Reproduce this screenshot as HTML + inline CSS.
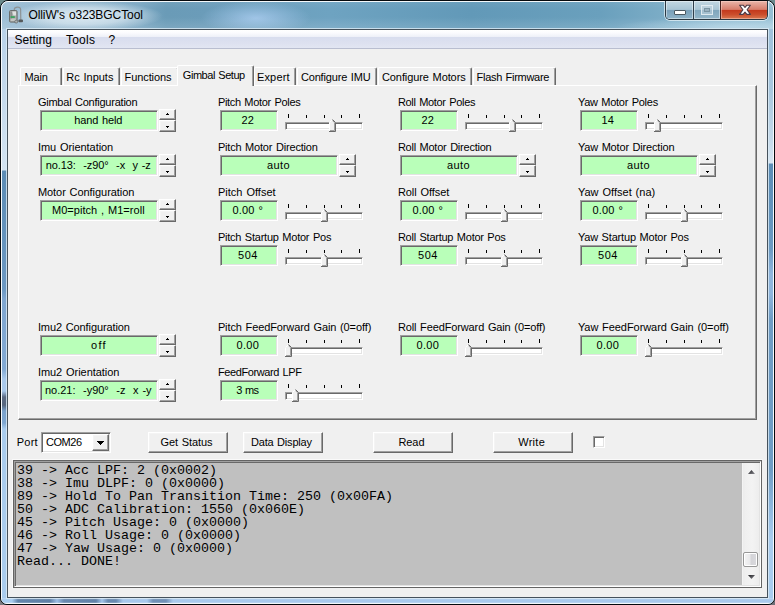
<!DOCTYPE html>
<html><head><meta charset="utf-8"><title>OlliW's o323BGCTool</title>
<style>
html,body{margin:0;padding:0;background:#000;}
body{width:775px;height:605px;overflow:hidden;position:relative;font-family:"Liberation Sans",sans-serif;}
#win{position:absolute;left:0;top:0;width:775px;height:605px;overflow:hidden;}
.abs,.t,.ed,.sp,.btn,.tab,.tk,.tr,.th{position:absolute;}
.t{white-space:pre;line-height:13px;height:13px;color:#000;}
.ed{box-sizing:border-box;height:21px;background:#b9ffb9;border:1px solid;border-color:#a0a0a0 #fff #fff #a0a0a0;box-shadow:inset 1px 1px 0 #696969, inset -1px -1px 0 #e3e3e3;}
.sb{position:absolute;box-sizing:border-box;width:17px;height:11px;background:#f0f0f0;border:1px solid;border-color:#fff #696969 #696969 #fff;box-shadow:inset -1px -1px 0 #a0a0a0, inset 1px 1px 0 #f4f4f4;}
.btn{box-sizing:border-box;width:80px;height:21px;background:#f0f0f0;border:1px solid;border-color:#fff #696969 #696969 #fff;box-shadow:inset -1px -1px 0 #a0a0a0, inset 1px 1px 0 #f4f4f4;}
.tk{width:1px;background:#000;}
.tr{box-sizing:border-box;width:78px;height:8px;background:#fff;border:1px solid;border-color:#a0a0a0 #fff #fff #a0a0a0;box-shadow:inset 1px 1px 0 #696969, inset -1px -1px 0 #e3e3e3;}
</style></head><body>
<div id="win">

<div class="abs" style="left:0;top:0;width:775px;height:605px;background:#05090d;"></div>
<div class="abs" style="left:0;top:0;width:8px;height:8px;background:#6a8a8c;"></div><div class="abs" style="left:767px;top:0;width:8px;height:8px;background:#6a8a8e;"></div>
<div class="abs" style="left:0;top:597px;width:8px;height:8px;background:#7a7a80;"></div><div class="abs" style="left:767px;top:597px;width:8px;height:8px;background:#707078;"></div>
<div class="abs" id="glass" style="left:0;top:0;width:775px;height:605px;box-sizing:border-box;border:1px solid #05090d;border-radius:8px 8px 7px 7px;
background:
 linear-gradient(to bottom, rgba(255,255,255,0.06) 0px, rgba(255,255,255,0) 8px, rgba(255,255,255,0) 16px, rgba(255,255,255,0.13) 28px, rgba(255,255,255,0) 29px),
 radial-gradient(ellipse 120px 10px at 735px 26px, rgba(190,220,236,0.7), rgba(190,220,236,0) 100%),
 radial-gradient(ellipse 78px 15px at 84px 15px, rgba(232,242,248,0.9), rgba(232,242,248,0.6) 55%, rgba(232,242,248,0) 100%),
 radial-gradient(ellipse 55px 17px at 255px 17px, rgba(168,203,238,0.85), rgba(168,203,238,0) 100%),
 linear-gradient(to right, #9dbfd6 0px, #98bad1 30px, #7ca8c3 138px, #6a9bb7 165px, #6b9cb9 205px, #6ea3c1 330px, #6299b8 470px, #6aa0bd 600px, #86b4cc 700px, #96bfd4 775px);"></div>
<div class="abs" style="left:1px;top:1px;width:773px;height:603px;box-sizing:border-box;border:1px solid rgba(255,255,255,0.92);border-radius:7px 7px 6px 6px;"></div>

<div class="abs" style="left:2px;top:29px;width:5px;height:570px;background:linear-gradient(to bottom,#b9d2e9 0px,#d3e3f1 140px,#d6e5f2 141px,#5c8cb5 142px,#6b98c2 260px,#7fa6d0 270px,#82a9d3 340px,#a9c9ec 350px,#a9c9ec 362px,#5a6a84 368px,#56667e 376px,#7aa2cc 382px,#7ea6d0 394px,#a9ccee 400px,#a9ccee 570px);"></div>
<div class="abs" style="left:768px;top:29px;width:5px;height:570px;background:linear-gradient(to bottom,#9fc1db 0px,#a8c7de 60px,#c4d9ea 110px,#d8e6f2 134px,#5b8db6 135px,#6c9ac2 220px,#8fb5dc 245px,#8fb5dc 265px,#6f9cc4 290px,#6f9cc4 440px,#90b8de 480px,#a9ccee 510px,#a9ccee 570px);"></div>
<div class="abs" style="left:2px;top:598px;width:771px;height:5px;border-radius:0 0 4px 4px;background:linear-gradient(to right,#a9cdf0 0px,#a9cdf0 10px,#6485ab 16px,#5f80a6 48px,#9bbde4 55px,#6888ae 62px,#6282a8 94px,#a2c4ea 100px,#6a8ab0 106px,#6a8ab0 114px,#a7c8ec 121px,#a7c8ec 145px,#7090b6 151px,#7090b6 164px,#a9c9ec 171px,#a9c9ec 771px);"></div>
<div class="abs" style="left:2px;top:598px;width:771px;height:5px;border-radius:0 0 4px 4px;background:linear-gradient(to bottom,rgba(255,255,255,0.25),rgba(255,255,255,0) 2px,rgba(255,255,255,0) 4px,rgba(255,255,255,0.3) 5px);"></div>
<div class="abs" style="left:6px;top:28px;width:763px;height:571px;box-sizing:border-box;border:1px solid rgba(220,235,245,0.8);"></div>
<div class="abs" style="left:7px;top:29px;width:761px;height:569px;box-sizing:border-box;border:1px solid #46525c;background:#f0f0f0;"></div>
<div class="abs" style="left:8px;top:30px;width:759px;height:19px;background:linear-gradient(#ffffff 0%,#fbfbfe 15%,#eef0f8 36%,#d8ddee 38%,#dde1f0 70%,#e3e7f3 100%);"></div>
<div class="abs" style="left:8px;top:48px;width:759px;height:1px;background:#b9bed0;"></div>
<svg class="abs" style="left:8px;top:6px" width="17" height="18" viewBox="0 0 17 18">
<path d="M6.3 4.5 L6.3 3.2 C6.6 0.6 12.3 0.4 12.6 3.2 L12.8 14" fill="none" stroke="#8d9294" stroke-width="1.2"/>
<rect x="1.5" y="4.5" width="7.6" height="11.6" rx="1.2" fill="#a7aaa8" stroke="#6a6e6c" stroke-width="1"/>
<path d="M4.2 5.6 L8 5.6 L8 9.4 L5.4 9.4 Z" fill="#dfe1df"/>
<rect x="2.4" y="5.6" width="1.6" height="9.4" fill="#8b8e8c"/>
<rect x="2.6" y="10.2" width="4.2" height="1.7" fill="#35a35a"/>
<rect x="2.6" y="12.6" width="5.4" height="2.4" fill="#c4c6c4"/>
<rect x="10.4" y="13.6" width="4.6" height="2.6" rx="1" fill="#55595b"/>
<circle cx="8.2" cy="15.6" r="1.5" fill="#b0b3b1" stroke="#5f6466" stroke-width="0.7"/>
</svg>
<div class="abs" style="left:664px;top:1px;width:105px;height:20px;box-sizing:border-box;border:1px solid rgba(235,245,250,0.7);border-top:none;border-radius:0 0 6px 6px;"></div>
<div class="abs" style="left:665px;top:1px;width:103px;height:19px;box-sizing:border-box;border:1px solid #2a3842;border-top:none;border-radius:0 0 5px 5px;overflow:hidden;background:#7faac2;">
 <div class="abs" style="left:0;top:0;width:27px;height:18px;background:linear-gradient(#c2d7e2 0%,#a8c4d4 47%,#789fb8 50%,#8fb3c8 100%);box-shadow:inset 0 0 0 1px rgba(255,255,255,0.45);"></div>
 <div class="abs" style="left:27px;top:0;width:1px;height:18px;background:#2f3e4a;"></div>
 <div class="abs" style="left:28px;top:0;width:26px;height:18px;background:linear-gradient(#c2d7e2 0%,#abc6d5 47%,#7fa5bc 50%,#93b6c9 100%);box-shadow:inset 0 0 0 1px rgba(255,255,255,0.45);"></div>
 <div class="abs" style="left:54px;top:0;width:1px;height:18px;background:#4a2420;"></div>
 <div class="abs" style="left:55px;top:0;width:47px;height:18px;background:linear-gradient(#e9b6aa 0%,#d77e6c 47%,#c3381c 50%,#cb4e2c 75%,#d97a52 100%);box-shadow:inset 0 0 0 1px rgba(255,220,210,0.45);"></div>
</div>
<div class="abs" style="left:674px;top:10px;width:12px;height:5px;box-sizing:border-box;border:1px solid #4a5860;background:#fff;border-radius:1px;"></div>
<div class="abs" style="left:701px;top:5px;width:12px;height:10px;box-sizing:border-box;border:1px solid rgba(235,242,246,0.8);background:rgba(200,215,225,0.5);"></div>
<div class="abs" style="left:704px;top:8px;width:6px;height:4px;box-sizing:border-box;border:1px solid rgba(120,145,160,0.9);background:rgba(150,175,190,0.8);"></div>
<svg class="abs" style="left:737px;top:3px" width="16" height="14" viewBox="0 0 16 14">
<path d="M2.6 2.2 L6.1 2.2 L8 4.5 L9.9 2.2 L13.4 2.2 L10.1 6.8 L13.4 11.4 L9.9 11.4 L8 9.1 L6.1 11.4 L2.6 11.4 L5.9 6.8 Z" fill="#fff" stroke="#4c3a44" stroke-width="1.1" stroke-linejoin="round"/>
</svg>

<div class="abs" style="left:18px;top:85px;width:739px;height:335px;box-sizing:border-box;border:1px solid;border-color:#fff #696969 #696969 #fff;box-shadow:inset -1px -1px 0 #a0a0a0;"></div>
<div class="abs" style="left:20px;top:67px;width:42px;height:18px;box-sizing:border-box;background:#f0f0f0;border:1px solid;border-color:#fff #696969 transparent #fff;border-bottom:none;border-radius:2px 2px 0 0;box-shadow:inset -1px 0 0 #a0a0a0;"></div>
<div class="abs" style="left:63px;top:67px;width:57px;height:18px;box-sizing:border-box;background:#f0f0f0;border:1px solid;border-color:#fff #696969 transparent #fff;border-bottom:none;border-radius:2px 2px 0 0;box-shadow:inset -1px 0 0 #a0a0a0;"></div>
<div class="abs" style="left:121px;top:67px;width:58px;height:18px;box-sizing:border-box;background:#f0f0f0;border:1px solid;border-color:#fff #696969 transparent #fff;border-bottom:none;border-radius:2px 2px 0 0;box-shadow:inset -1px 0 0 #a0a0a0;"></div>
<div class="abs" style="left:177px;top:65px;width:77px;height:21px;box-sizing:border-box;background:#f0f0f0;border:1px solid;border-color:#fff #696969 transparent #fff;border-bottom:none;border-radius:2px 2px 0 0;box-shadow:inset -1px 0 0 #a0a0a0;"></div>
<div class="abs" style="left:254px;top:67px;width:42px;height:18px;box-sizing:border-box;background:#f0f0f0;border:1px solid;border-color:#fff #696969 transparent #fff;border-bottom:none;border-radius:2px 2px 0 0;box-shadow:inset -1px 0 0 #a0a0a0;"></div>
<div class="abs" style="left:297px;top:67px;width:80px;height:18px;box-sizing:border-box;background:#f0f0f0;border:1px solid;border-color:#fff #696969 transparent #fff;border-bottom:none;border-radius:2px 2px 0 0;box-shadow:inset -1px 0 0 #a0a0a0;"></div>
<div class="abs" style="left:378px;top:67px;width:94px;height:18px;box-sizing:border-box;background:#f0f0f0;border:1px solid;border-color:#fff #696969 transparent #fff;border-bottom:none;border-radius:2px 2px 0 0;box-shadow:inset -1px 0 0 #a0a0a0;"></div>
<div class="abs" style="left:473px;top:67px;width:83px;height:18px;box-sizing:border-box;background:#f0f0f0;border:1px solid;border-color:#fff #696969 transparent #fff;border-bottom:none;border-radius:2px 2px 0 0;box-shadow:inset -1px 0 0 #a0a0a0;"></div>
<div class="ed" style="left:40px;top:110px;width:118px"></div>
<div class="ed" style="left:40px;top:155px;width:118px"></div>
<div class="ed" style="left:40px;top:200px;width:118px"></div>
<div class="ed" style="left:40px;top:335px;width:118px"></div>
<div class="ed" style="left:40px;top:380px;width:118px"></div>
<div class="ed" style="left:220px;top:110px;width:58px"></div>
<div class="ed" style="left:220px;top:155px;width:118px"></div>
<div class="ed" style="left:220px;top:200px;width:58px"></div>
<div class="ed" style="left:220px;top:245px;width:58px"></div>
<div class="ed" style="left:220px;top:335px;width:58px"></div>
<div class="ed" style="left:400px;top:110px;width:58px"></div>
<div class="ed" style="left:400px;top:155px;width:118px"></div>
<div class="ed" style="left:400px;top:200px;width:58px"></div>
<div class="ed" style="left:400px;top:245px;width:58px"></div>
<div class="ed" style="left:400px;top:335px;width:58px"></div>
<div class="ed" style="left:580px;top:110px;width:58px"></div>
<div class="ed" style="left:580px;top:155px;width:118px"></div>
<div class="ed" style="left:580px;top:200px;width:58px"></div>
<div class="ed" style="left:580px;top:245px;width:58px"></div>
<div class="ed" style="left:580px;top:335px;width:58px"></div>
<div class="ed" style="left:220px;top:380px;width:58px"></div>
<div class="sb" style="left:159px;top:109px"><svg class="abs" style="left:6px;top:3px" width="3" height="2" viewBox="0 0 3 2"><path d="M1 0h1v1h1v1h-3v-1h1z" fill="#000"/></svg></div><div class="sb" style="left:159px;top:120px;height:12px"><svg class="abs" style="left:6px;top:5px" width="3" height="2" viewBox="0 0 3 2"><path d="M0 0h3v1h-1v1h-1v-1h-1z" fill="#000"/></svg></div>
<div class="sb" style="left:159px;top:154px"><svg class="abs" style="left:6px;top:3px" width="3" height="2" viewBox="0 0 3 2"><path d="M1 0h1v1h1v1h-3v-1h1z" fill="#000"/></svg></div><div class="sb" style="left:159px;top:165px;height:12px"><svg class="abs" style="left:6px;top:5px" width="3" height="2" viewBox="0 0 3 2"><path d="M0 0h3v1h-1v1h-1v-1h-1z" fill="#000"/></svg></div>
<div class="sb" style="left:159px;top:199px"><svg class="abs" style="left:6px;top:3px" width="3" height="2" viewBox="0 0 3 2"><path d="M1 0h1v1h1v1h-3v-1h1z" fill="#000"/></svg></div><div class="sb" style="left:159px;top:210px;height:12px"><svg class="abs" style="left:6px;top:5px" width="3" height="2" viewBox="0 0 3 2"><path d="M0 0h3v1h-1v1h-1v-1h-1z" fill="#000"/></svg></div>
<div class="sb" style="left:159px;top:334px"><svg class="abs" style="left:6px;top:3px" width="3" height="2" viewBox="0 0 3 2"><path d="M1 0h1v1h1v1h-3v-1h1z" fill="#000"/></svg></div><div class="sb" style="left:159px;top:345px;height:12px"><svg class="abs" style="left:6px;top:5px" width="3" height="2" viewBox="0 0 3 2"><path d="M0 0h3v1h-1v1h-1v-1h-1z" fill="#000"/></svg></div>
<div class="sb" style="left:159px;top:379px"><svg class="abs" style="left:6px;top:3px" width="3" height="2" viewBox="0 0 3 2"><path d="M1 0h1v1h1v1h-3v-1h1z" fill="#000"/></svg></div><div class="sb" style="left:159px;top:390px;height:12px"><svg class="abs" style="left:6px;top:5px" width="3" height="2" viewBox="0 0 3 2"><path d="M0 0h3v1h-1v1h-1v-1h-1z" fill="#000"/></svg></div>
<div class="sb" style="left:339px;top:154px"><svg class="abs" style="left:6px;top:3px" width="3" height="2" viewBox="0 0 3 2"><path d="M1 0h1v1h1v1h-3v-1h1z" fill="#000"/></svg></div><div class="sb" style="left:339px;top:165px;height:12px"><svg class="abs" style="left:6px;top:5px" width="3" height="2" viewBox="0 0 3 2"><path d="M0 0h3v1h-1v1h-1v-1h-1z" fill="#000"/></svg></div>
<div class="sb" style="left:519px;top:154px"><svg class="abs" style="left:6px;top:3px" width="3" height="2" viewBox="0 0 3 2"><path d="M1 0h1v1h1v1h-3v-1h1z" fill="#000"/></svg></div><div class="sb" style="left:519px;top:165px;height:12px"><svg class="abs" style="left:6px;top:5px" width="3" height="2" viewBox="0 0 3 2"><path d="M0 0h3v1h-1v1h-1v-1h-1z" fill="#000"/></svg></div>
<div class="sb" style="left:699px;top:154px"><svg class="abs" style="left:6px;top:3px" width="3" height="2" viewBox="0 0 3 2"><path d="M1 0h1v1h1v1h-3v-1h1z" fill="#000"/></svg></div><div class="sb" style="left:699px;top:165px;height:12px"><svg class="abs" style="left:6px;top:5px" width="3" height="2" viewBox="0 0 3 2"><path d="M0 0h3v1h-1v1h-1v-1h-1z" fill="#000"/></svg></div>
<div class="tk" style="left:288px;top:114px;height:4px"></div>
<div class="tk" style="left:306px;top:115px;height:3px"></div>
<div class="tk" style="left:324px;top:115px;height:3px"></div>
<div class="tk" style="left:341px;top:115px;height:3px"></div>
<div class="tk" style="left:359px;top:114px;height:4px"></div>
<div class="tr" style="left:285px;top:122px"></div>
<svg class="abs" style="left:329px;top:119px" width="7" height="13" viewBox="0 0 7 13">
<path d="M0 3.5 L3.5 0 L7 3.5 L7 13 L0 13 Z" fill="#f0f0f0"/>
<path d="M0.5 12 L0.5 3.5 L3.5 0.5" fill="none" stroke="#fff" stroke-width="1"/>
<path d="M3.5 0.5 L6.5 3.5 L6.5 12.5 L0 12.5" fill="none" stroke="#696969" stroke-width="1"/>
<path d="M3.5 1.5 L5.5 3.7 L5.5 11.5 L1 11.5" fill="none" stroke="#a0a0a0" stroke-width="1"/>
</svg>
<div class="tk" style="left:288px;top:204px;height:4px"></div>
<div class="tk" style="left:306px;top:205px;height:3px"></div>
<div class="tk" style="left:324px;top:205px;height:3px"></div>
<div class="tk" style="left:341px;top:205px;height:3px"></div>
<div class="tk" style="left:359px;top:204px;height:4px"></div>
<div class="tr" style="left:285px;top:212px"></div>
<svg class="abs" style="left:321px;top:209px" width="7" height="13" viewBox="0 0 7 13">
<path d="M0 3.5 L3.5 0 L7 3.5 L7 13 L0 13 Z" fill="#f0f0f0"/>
<path d="M0.5 12 L0.5 3.5 L3.5 0.5" fill="none" stroke="#fff" stroke-width="1"/>
<path d="M3.5 0.5 L6.5 3.5 L6.5 12.5 L0 12.5" fill="none" stroke="#696969" stroke-width="1"/>
<path d="M3.5 1.5 L5.5 3.7 L5.5 11.5 L1 11.5" fill="none" stroke="#a0a0a0" stroke-width="1"/>
</svg>
<div class="tk" style="left:288px;top:249px;height:4px"></div>
<div class="tk" style="left:306px;top:250px;height:3px"></div>
<div class="tk" style="left:324px;top:250px;height:3px"></div>
<div class="tk" style="left:341px;top:250px;height:3px"></div>
<div class="tk" style="left:359px;top:249px;height:4px"></div>
<div class="tr" style="left:285px;top:257px"></div>
<svg class="abs" style="left:321px;top:254px" width="7" height="13" viewBox="0 0 7 13">
<path d="M0 3.5 L3.5 0 L7 3.5 L7 13 L0 13 Z" fill="#f0f0f0"/>
<path d="M0.5 12 L0.5 3.5 L3.5 0.5" fill="none" stroke="#fff" stroke-width="1"/>
<path d="M3.5 0.5 L6.5 3.5 L6.5 12.5 L0 12.5" fill="none" stroke="#696969" stroke-width="1"/>
<path d="M3.5 1.5 L5.5 3.7 L5.5 11.5 L1 11.5" fill="none" stroke="#a0a0a0" stroke-width="1"/>
</svg>
<div class="tk" style="left:288px;top:339px;height:4px"></div>
<div class="tk" style="left:306px;top:340px;height:3px"></div>
<div class="tk" style="left:324px;top:340px;height:3px"></div>
<div class="tk" style="left:341px;top:340px;height:3px"></div>
<div class="tk" style="left:359px;top:339px;height:4px"></div>
<div class="tr" style="left:285px;top:347px"></div>
<svg class="abs" style="left:285px;top:344px" width="7" height="13" viewBox="0 0 7 13">
<path d="M0 3.5 L3.5 0 L7 3.5 L7 13 L0 13 Z" fill="#f0f0f0"/>
<path d="M0.5 12 L0.5 3.5 L3.5 0.5" fill="none" stroke="#fff" stroke-width="1"/>
<path d="M3.5 0.5 L6.5 3.5 L6.5 12.5 L0 12.5" fill="none" stroke="#696969" stroke-width="1"/>
<path d="M3.5 1.5 L5.5 3.7 L5.5 11.5 L1 11.5" fill="none" stroke="#a0a0a0" stroke-width="1"/>
</svg>
<div class="tk" style="left:468px;top:114px;height:4px"></div>
<div class="tk" style="left:486px;top:115px;height:3px"></div>
<div class="tk" style="left:504px;top:115px;height:3px"></div>
<div class="tk" style="left:521px;top:115px;height:3px"></div>
<div class="tk" style="left:539px;top:114px;height:4px"></div>
<div class="tr" style="left:465px;top:122px"></div>
<svg class="abs" style="left:509px;top:119px" width="7" height="13" viewBox="0 0 7 13">
<path d="M0 3.5 L3.5 0 L7 3.5 L7 13 L0 13 Z" fill="#f0f0f0"/>
<path d="M0.5 12 L0.5 3.5 L3.5 0.5" fill="none" stroke="#fff" stroke-width="1"/>
<path d="M3.5 0.5 L6.5 3.5 L6.5 12.5 L0 12.5" fill="none" stroke="#696969" stroke-width="1"/>
<path d="M3.5 1.5 L5.5 3.7 L5.5 11.5 L1 11.5" fill="none" stroke="#a0a0a0" stroke-width="1"/>
</svg>
<div class="tk" style="left:468px;top:204px;height:4px"></div>
<div class="tk" style="left:486px;top:205px;height:3px"></div>
<div class="tk" style="left:504px;top:205px;height:3px"></div>
<div class="tk" style="left:521px;top:205px;height:3px"></div>
<div class="tk" style="left:539px;top:204px;height:4px"></div>
<div class="tr" style="left:465px;top:212px"></div>
<svg class="abs" style="left:501px;top:209px" width="7" height="13" viewBox="0 0 7 13">
<path d="M0 3.5 L3.5 0 L7 3.5 L7 13 L0 13 Z" fill="#f0f0f0"/>
<path d="M0.5 12 L0.5 3.5 L3.5 0.5" fill="none" stroke="#fff" stroke-width="1"/>
<path d="M3.5 0.5 L6.5 3.5 L6.5 12.5 L0 12.5" fill="none" stroke="#696969" stroke-width="1"/>
<path d="M3.5 1.5 L5.5 3.7 L5.5 11.5 L1 11.5" fill="none" stroke="#a0a0a0" stroke-width="1"/>
</svg>
<div class="tk" style="left:468px;top:249px;height:4px"></div>
<div class="tk" style="left:486px;top:250px;height:3px"></div>
<div class="tk" style="left:504px;top:250px;height:3px"></div>
<div class="tk" style="left:521px;top:250px;height:3px"></div>
<div class="tk" style="left:539px;top:249px;height:4px"></div>
<div class="tr" style="left:465px;top:257px"></div>
<svg class="abs" style="left:501px;top:254px" width="7" height="13" viewBox="0 0 7 13">
<path d="M0 3.5 L3.5 0 L7 3.5 L7 13 L0 13 Z" fill="#f0f0f0"/>
<path d="M0.5 12 L0.5 3.5 L3.5 0.5" fill="none" stroke="#fff" stroke-width="1"/>
<path d="M3.5 0.5 L6.5 3.5 L6.5 12.5 L0 12.5" fill="none" stroke="#696969" stroke-width="1"/>
<path d="M3.5 1.5 L5.5 3.7 L5.5 11.5 L1 11.5" fill="none" stroke="#a0a0a0" stroke-width="1"/>
</svg>
<div class="tk" style="left:468px;top:339px;height:4px"></div>
<div class="tk" style="left:486px;top:340px;height:3px"></div>
<div class="tk" style="left:504px;top:340px;height:3px"></div>
<div class="tk" style="left:521px;top:340px;height:3px"></div>
<div class="tk" style="left:539px;top:339px;height:4px"></div>
<div class="tr" style="left:465px;top:347px"></div>
<svg class="abs" style="left:465px;top:344px" width="7" height="13" viewBox="0 0 7 13">
<path d="M0 3.5 L3.5 0 L7 3.5 L7 13 L0 13 Z" fill="#f0f0f0"/>
<path d="M0.5 12 L0.5 3.5 L3.5 0.5" fill="none" stroke="#fff" stroke-width="1"/>
<path d="M3.5 0.5 L6.5 3.5 L6.5 12.5 L0 12.5" fill="none" stroke="#696969" stroke-width="1"/>
<path d="M3.5 1.5 L5.5 3.7 L5.5 11.5 L1 11.5" fill="none" stroke="#a0a0a0" stroke-width="1"/>
</svg>
<div class="tk" style="left:648px;top:114px;height:4px"></div>
<div class="tk" style="left:666px;top:115px;height:3px"></div>
<div class="tk" style="left:684px;top:115px;height:3px"></div>
<div class="tk" style="left:701px;top:115px;height:3px"></div>
<div class="tk" style="left:719px;top:114px;height:4px"></div>
<div class="tr" style="left:645px;top:122px"></div>
<svg class="abs" style="left:654px;top:119px" width="7" height="13" viewBox="0 0 7 13">
<path d="M0 3.5 L3.5 0 L7 3.5 L7 13 L0 13 Z" fill="#f0f0f0"/>
<path d="M0.5 12 L0.5 3.5 L3.5 0.5" fill="none" stroke="#fff" stroke-width="1"/>
<path d="M3.5 0.5 L6.5 3.5 L6.5 12.5 L0 12.5" fill="none" stroke="#696969" stroke-width="1"/>
<path d="M3.5 1.5 L5.5 3.7 L5.5 11.5 L1 11.5" fill="none" stroke="#a0a0a0" stroke-width="1"/>
</svg>
<div class="tk" style="left:648px;top:204px;height:4px"></div>
<div class="tk" style="left:666px;top:205px;height:3px"></div>
<div class="tk" style="left:684px;top:205px;height:3px"></div>
<div class="tk" style="left:701px;top:205px;height:3px"></div>
<div class="tk" style="left:719px;top:204px;height:4px"></div>
<div class="tr" style="left:645px;top:212px"></div>
<svg class="abs" style="left:681px;top:209px" width="7" height="13" viewBox="0 0 7 13">
<path d="M0 3.5 L3.5 0 L7 3.5 L7 13 L0 13 Z" fill="#f0f0f0"/>
<path d="M0.5 12 L0.5 3.5 L3.5 0.5" fill="none" stroke="#fff" stroke-width="1"/>
<path d="M3.5 0.5 L6.5 3.5 L6.5 12.5 L0 12.5" fill="none" stroke="#696969" stroke-width="1"/>
<path d="M3.5 1.5 L5.5 3.7 L5.5 11.5 L1 11.5" fill="none" stroke="#a0a0a0" stroke-width="1"/>
</svg>
<div class="tk" style="left:648px;top:249px;height:4px"></div>
<div class="tk" style="left:666px;top:250px;height:3px"></div>
<div class="tk" style="left:684px;top:250px;height:3px"></div>
<div class="tk" style="left:701px;top:250px;height:3px"></div>
<div class="tk" style="left:719px;top:249px;height:4px"></div>
<div class="tr" style="left:645px;top:257px"></div>
<svg class="abs" style="left:681px;top:254px" width="7" height="13" viewBox="0 0 7 13">
<path d="M0 3.5 L3.5 0 L7 3.5 L7 13 L0 13 Z" fill="#f0f0f0"/>
<path d="M0.5 12 L0.5 3.5 L3.5 0.5" fill="none" stroke="#fff" stroke-width="1"/>
<path d="M3.5 0.5 L6.5 3.5 L6.5 12.5 L0 12.5" fill="none" stroke="#696969" stroke-width="1"/>
<path d="M3.5 1.5 L5.5 3.7 L5.5 11.5 L1 11.5" fill="none" stroke="#a0a0a0" stroke-width="1"/>
</svg>
<div class="tk" style="left:648px;top:339px;height:4px"></div>
<div class="tk" style="left:666px;top:340px;height:3px"></div>
<div class="tk" style="left:684px;top:340px;height:3px"></div>
<div class="tk" style="left:701px;top:340px;height:3px"></div>
<div class="tk" style="left:719px;top:339px;height:4px"></div>
<div class="tr" style="left:645px;top:347px"></div>
<svg class="abs" style="left:645px;top:344px" width="7" height="13" viewBox="0 0 7 13">
<path d="M0 3.5 L3.5 0 L7 3.5 L7 13 L0 13 Z" fill="#f0f0f0"/>
<path d="M0.5 12 L0.5 3.5 L3.5 0.5" fill="none" stroke="#fff" stroke-width="1"/>
<path d="M3.5 0.5 L6.5 3.5 L6.5 12.5 L0 12.5" fill="none" stroke="#696969" stroke-width="1"/>
<path d="M3.5 1.5 L5.5 3.7 L5.5 11.5 L1 11.5" fill="none" stroke="#a0a0a0" stroke-width="1"/>
</svg>
<div class="tk" style="left:288px;top:384px;height:4px"></div>
<div class="tk" style="left:306px;top:385px;height:3px"></div>
<div class="tk" style="left:324px;top:385px;height:3px"></div>
<div class="tk" style="left:341px;top:385px;height:3px"></div>
<div class="tk" style="left:359px;top:384px;height:4px"></div>
<div class="tr" style="left:285px;top:392px"></div>
<svg class="abs" style="left:292px;top:389px" width="7" height="13" viewBox="0 0 7 13">
<path d="M0 3.5 L3.5 0 L7 3.5 L7 13 L0 13 Z" fill="#f0f0f0"/>
<path d="M0.5 12 L0.5 3.5 L3.5 0.5" fill="none" stroke="#fff" stroke-width="1"/>
<path d="M3.5 0.5 L6.5 3.5 L6.5 12.5 L0 12.5" fill="none" stroke="#696969" stroke-width="1"/>
<path d="M3.5 1.5 L5.5 3.7 L5.5 11.5 L1 11.5" fill="none" stroke="#a0a0a0" stroke-width="1"/>
</svg>
<div class="abs" style="left:41px;top:432px;width:70px;height:21px;box-sizing:border-box;background:#fff;border:1px solid;border-color:#a0a0a0 #fff #fff #a0a0a0;box-shadow:inset 1px 1px 0 #696969, inset -1px -1px 0 #e3e3e3;"></div>
<div class="sb" style="left:92px;top:434px;width:17px;height:17px;"><svg class="abs" style="left:4px;top:6px" width="7" height="4" viewBox="0 0 7 4"><path d="M0 0h7v1h-1v1h-1v1h-1v1h-1v-1h-1v-1h-1v-1h-1z" fill="#000"/></svg></div>
<div class="btn" style="left:148px;top:432px"></div>
<div class="btn" style="left:243px;top:432px"></div>
<div class="btn" style="left:373px;top:432px"></div>
<div class="btn" style="left:493px;top:432px"></div>
<div class="abs" style="left:593px;top:436px;width:12px;height:12px;box-sizing:border-box;background:#fff;border:1px solid;border-color:#a0a0a0 #fff #fff #a0a0a0;box-shadow:inset 1px 1px 0 #696969, inset -1px -1px 0 #e3e3e3;"></div>
<div class="abs" style="left:12px;top:459px;width:751px;height:130px;box-sizing:border-box;border:1px solid;border-color:#fafafa #f0f0f0 #f0f0f0 #fafafa;"></div>
<div class="abs" style="left:13px;top:460px;width:749px;height:128px;box-sizing:border-box;border:1px solid #646464;"></div>
<div class="abs" style="left:14px;top:461px;width:747px;height:126px;box-sizing:border-box;background:#c0c0c0;border:1px solid;border-color:#a0a0a0 #fff #fff #a0a0a0;box-shadow:inset 1px 1px 0 #696969, inset -1px -1px 0 #e3e3e3;"></div>
<div class="abs" style="left:742px;top:463px;width:17px;height:122px;background:linear-gradient(to right,#fbfbfb 0,#ececec 1px,#efefef 3px,#f3f3f3 60%,#ededed 100%);"></div>
<svg class="abs" style="left:748px;top:470px" width="7" height="4" viewBox="0 0 7 4"><defs><linearGradient id="ag" x1="0" y1="0" x2="1" y2="1"><stop offset="0" stop-color="#1e1e22"/><stop offset="1" stop-color="#8a8a90"/></linearGradient></defs><path d="M0 4 L3.5 0 L7 4 Z" fill="url(#ag)"/></svg>
<svg class="abs" style="left:748px;top:575px" width="7" height="4" viewBox="0 0 7 4"><path d="M0 0 L7 0 L3.5 4 Z" fill="url(#ag)"/></svg>
<div class="abs" style="left:743px;top:552px;width:15px;height:15px;box-sizing:border-box;border:1px solid #979797;border-radius:2px;background:linear-gradient(to right,#f4f4f4 0,#e9e9eb 45%,#d4d4d8 55%,#d9d9dd 100%);box-shadow:inset 0 0 0 1px #fff;"></div>

<div class="t" style="left:17px;top:464px;font:13.33px/13px 'Liberation Mono',monospace;">39 -> Acc LPF: 2 (0x0002)</div>
<div class="t" style="left:17px;top:477px;font:13.33px/13px 'Liberation Mono',monospace;">38 -> Imu DLPF: 0 (0x0000)</div>
<div class="t" style="left:17px;top:490px;font:13.33px/13px 'Liberation Mono',monospace;">89 -> Hold To Pan Transition Time: 250 (0x00FA)</div>
<div class="t" style="left:17px;top:503px;font:13.33px/13px 'Liberation Mono',monospace;">50 -> ADC Calibration: 1550 (0x060E)</div>
<div class="t" style="left:17px;top:516px;font:13.33px/13px 'Liberation Mono',monospace;">45 -> Pitch Usage: 0 (0x0000)</div>
<div class="t" style="left:17px;top:529px;font:13.33px/13px 'Liberation Mono',monospace;">46 -> Roll Usage: 0 (0x0000)</div>
<div class="t" style="left:17px;top:542px;font:13.33px/13px 'Liberation Mono',monospace;">47 -> Yaw Usage: 0 (0x0000)</div>
<div class="t" style="left:17px;top:555px;font:13.33px/13px 'Liberation Mono',monospace;">Read... DONE!</div>
<div class="t" style="left:28.40px;top:9px;font-size:12px;letter-spacing:-0.068px;word-spacing:0.8px;">OlliW's o323BGCTool</div>
<div class="t" style="left:14.40px;top:34px;font-size:12px;letter-spacing:0.034px;">Setting</div>
<div class="t" style="left:66.00px;top:34px;font-size:12px;letter-spacing:0.217px;">Tools</div>
<div class="t" style="left:108.40px;top:34px;font-size:12px;">?</div>
<div class="t" style="left:24.60px;top:71px;font-size:11px;letter-spacing:-0.186px;">Main</div>
<div class="t" style="left:66.30px;top:71px;font-size:11px;letter-spacing:-0.019px;word-spacing:0.8px;">Rc Inputs</div>
<div class="t" style="left:124.60px;top:71px;font-size:11px;letter-spacing:-0.1px;">Functions</div>
<div class="t" style="left:182.80px;top:69px;font-size:11px;letter-spacing:-0.455px;word-spacing:0.8px;">Gimbal Setup</div>
<div class="t" style="left:256.90px;top:71px;font-size:11px;letter-spacing:0.184px;">Expert</div>
<div class="t" style="left:300.90px;top:71px;font-size:11px;letter-spacing:-0.163px;word-spacing:0.8px;">Configure IMU</div>
<div class="t" style="left:382.00px;top:71px;font-size:11px;letter-spacing:-0.098px;word-spacing:0.8px;">Configure Motors</div>
<div class="t" style="left:476.60px;top:71px;font-size:11px;letter-spacing:-0.293px;word-spacing:0.8px;">Flash Firmware</div>
<div class="t" style="left:37.90px;top:96px;font-size:11px;letter-spacing:-0.232px;word-spacing:0.8px;">Gimbal Configuration</div>
<div class="t" style="left:74.24px;top:114px;font-size:11px;letter-spacing:-0.125px;word-spacing:0.8px;">hand held</div>
<div class="t" style="left:37.90px;top:141px;font-size:11px;letter-spacing:-0.047px;word-spacing:0.8px;">Imu Orientation</div>
<div class="t" style="left:45.75px;top:159px;font-size:11px;letter-spacing:-0.096px;word-spacing:0.8px;">no.13:  -z90°  -x  y -z</div>
<div class="t" style="left:37.90px;top:186px;font-size:11px;letter-spacing:-0.048px;word-spacing:0.8px;">Motor Configuration</div>
<div class="t" style="left:52.01px;top:204px;font-size:11px;letter-spacing:0.029px;word-spacing:0.8px;">M0=pitch , M1=roll</div>
<div class="t" style="left:37.90px;top:321px;font-size:11px;letter-spacing:-0.097px;word-spacing:0.8px;">Imu2 Configuration</div>
<div class="t" style="left:90.96px;top:339px;font-size:11px;letter-spacing:1.323px;">off</div>
<div class="t" style="left:37.90px;top:366px;font-size:11px;letter-spacing:-0.039px;word-spacing:0.8px;">Imu2 Orientation</div>
<div class="t" style="left:45.04px;top:384px;font-size:11px;letter-spacing:-0.031px;word-spacing:0.8px;">no.21:  -y90°  -z  x -y</div>
<div class="t" style="left:217.90px;top:96px;font-size:11px;letter-spacing:-0.312px;word-spacing:0.8px;">Pitch Motor Poles</div>
<div class="t" style="left:241.49px;top:114px;font-size:11px;letter-spacing:0.175px;">22</div>
<div class="t" style="left:217.90px;top:141px;font-size:11px;letter-spacing:-0.185px;word-spacing:0.8px;">Pitch Motor Direction</div>
<div class="t" style="left:267.03px;top:159px;font-size:11px;letter-spacing:0.37px;">auto</div>
<div class="t" style="left:217.90px;top:186px;font-size:11px;letter-spacing:0.029px;word-spacing:0.8px;">Pitch Offset</div>
<div class="t" style="left:232.44px;top:204px;font-size:11px;letter-spacing:0.171px;word-spacing:0.8px;">0.00 °</div>
<div class="t" style="left:217.90px;top:231px;font-size:11px;letter-spacing:-0.229px;word-spacing:0.8px;">Pitch Startup Motor Pos</div>
<div class="t" style="left:238.11px;top:249px;font-size:11px;letter-spacing:0.414px;">504</div>
<div class="t" style="left:217.90px;top:321px;font-size:11px;letter-spacing:-0.109px;word-spacing:0.8px;">Pitch FeedForward Gain (0=off)</div>
<div class="t" style="left:236.62px;top:339px;font-size:11px;letter-spacing:0.245px;">0.00</div>
<div class="t" style="left:397.90px;top:96px;font-size:11px;letter-spacing:-0.313px;word-spacing:0.8px;">Roll Motor Poles</div>
<div class="t" style="left:421.49px;top:114px;font-size:11px;letter-spacing:0.175px;">22</div>
<div class="t" style="left:397.90px;top:141px;font-size:11px;letter-spacing:-0.23px;word-spacing:0.8px;">Roll Motor Direction</div>
<div class="t" style="left:447.03px;top:159px;font-size:11px;letter-spacing:0.37px;">auto</div>
<div class="t" style="left:397.90px;top:186px;font-size:11px;letter-spacing:-0.041px;word-spacing:0.8px;">Roll Offset</div>
<div class="t" style="left:412.44px;top:204px;font-size:11px;letter-spacing:0.171px;word-spacing:0.8px;">0.00 °</div>
<div class="t" style="left:397.90px;top:231px;font-size:11px;letter-spacing:-0.243px;word-spacing:0.8px;">Roll Startup Motor Pos</div>
<div class="t" style="left:418.11px;top:249px;font-size:11px;letter-spacing:0.414px;">504</div>
<div class="t" style="left:397.90px;top:321px;font-size:11px;letter-spacing:-0.123px;word-spacing:0.8px;">Roll FeedForward Gain (0=off)</div>
<div class="t" style="left:416.62px;top:339px;font-size:11px;letter-spacing:0.245px;">0.00</div>
<div class="t" style="left:577.90px;top:96px;font-size:11px;letter-spacing:-0.262px;word-spacing:0.8px;">Yaw Motor Poles</div>
<div class="t" style="left:601.49px;top:114px;font-size:11px;letter-spacing:0.175px;">14</div>
<div class="t" style="left:577.90px;top:141px;font-size:11px;letter-spacing:-0.175px;word-spacing:0.8px;">Yaw Motor Direction</div>
<div class="t" style="left:627.03px;top:159px;font-size:11px;letter-spacing:0.37px;">auto</div>
<div class="t" style="left:577.90px;top:186px;font-size:11px;letter-spacing:0.026px;word-spacing:0.8px;">Yaw Offset (na)</div>
<div class="t" style="left:592.44px;top:204px;font-size:11px;letter-spacing:0.171px;word-spacing:0.8px;">0.00 °</div>
<div class="t" style="left:577.90px;top:231px;font-size:11px;letter-spacing:-0.176px;word-spacing:0.8px;">Yaw Startup Motor Pos</div>
<div class="t" style="left:598.11px;top:249px;font-size:11px;letter-spacing:0.414px;">504</div>
<div class="t" style="left:577.90px;top:321px;font-size:11px;letter-spacing:-0.061px;word-spacing:0.8px;">Yaw FeedForward Gain (0=off)</div>
<div class="t" style="left:596.62px;top:339px;font-size:11px;letter-spacing:0.245px;">0.00</div>
<div class="t" style="left:217.90px;top:366px;font-size:11px;letter-spacing:-0.39px;word-spacing:0.8px;">FeedForward LPF</div>
<div class="t" style="left:236.33px;top:384px;font-size:11px;letter-spacing:-0.636px;word-spacing:0.8px;">3 ms</div>
<div class="t" style="left:16.70px;top:436px;font-size:11px;letter-spacing:0.253px;">Port</div>
<div class="t" style="left:46.00px;top:436px;font-size:11px;letter-spacing:-0.441px;">COM26</div>
<div class="t" style="left:160.46px;top:436px;font-size:11px;letter-spacing:-0.078px;word-spacing:0.8px;">Get Status</div>
<div class="t" style="left:251.05px;top:436px;font-size:11px;letter-spacing:-0.205px;word-spacing:0.8px;">Data Display</div>
<div class="t" style="left:398.46px;top:436px;font-size:11px;letter-spacing:-0.074px;">Read</div>
<div class="t" style="left:518.15px;top:436px;font-size:11px;letter-spacing:0.306px;">Write</div>
</div></body></html>
